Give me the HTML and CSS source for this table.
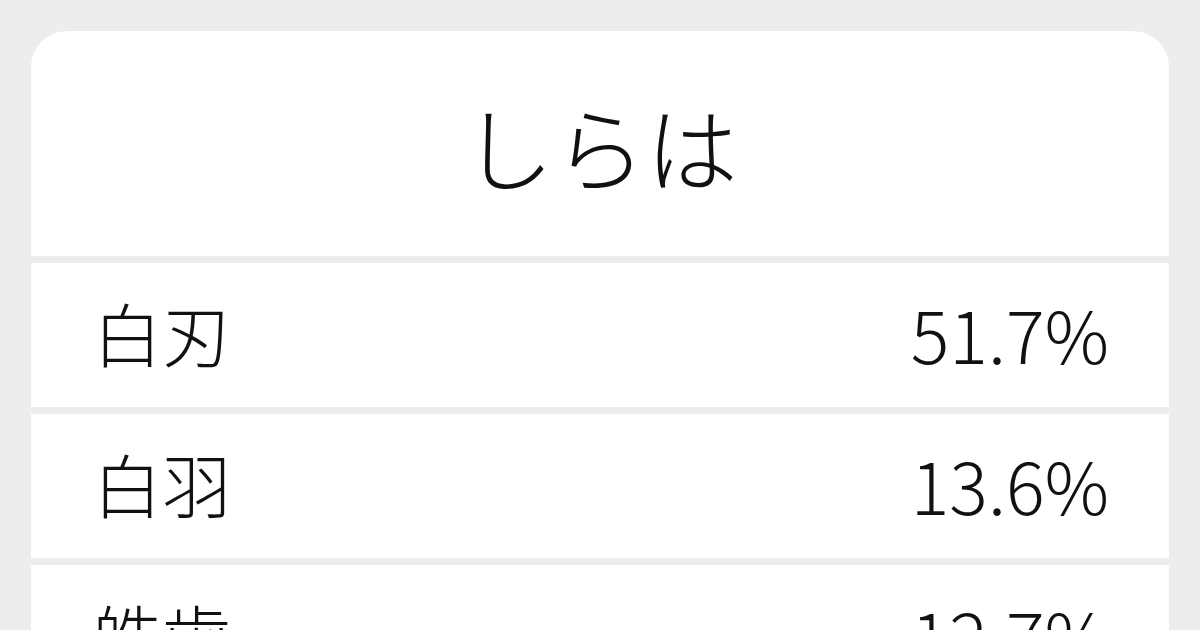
FILE: index.html
```html
<!DOCTYPE html>
<html lang="ja">
<head>
    <meta charset="UTF-8">
    <meta name="viewport" content="width=device-width, initial-scale=1.0">
    <title>しらは</title>
    <link rel="stylesheet" href="styles.css">
</head>
<body>
    <div class="card">
        <div class="header">しらは</div>
        <div class="row">
            <span class="word">白刃</span>
            <span class="rate">51.7%</span>
        </div>
        <div class="row">
            <span class="word">白羽</span>
            <span class="rate">13.6%</span>
        </div>
        <div class="row">
            <span class="word">皓歯</span>
            <span class="rate">12.7%</span>
        </div>
    </div>
</body>
</html>
```

FILE: styles.css
```css
body {
    margin: 0;
    padding: 31px 31px 0;
    background-color: #ededed;
    font-family: "Noto Sans CJK JP", sans-serif;
    font-weight: 300;
    color: #111;
    height: 630px;
    box-sizing: border-box;
    overflow: hidden;
}
.card {
    display: flex;
    flex-direction: column;
    gap: 7px;
    border-radius: 36px 36px 0 0;
    overflow: hidden;
}
.header {
    height: 225px;
    background-color: #fff;
    display: flex;
    align-items: center;
    justify-content: center;
    font-size: 92px;
    padding-top: 2px;
    box-sizing: border-box;
}
.row {
    height: 144px;
    flex-shrink: 0;
    background-color: #fff;
    display: flex;
    align-items: center;
    justify-content: space-between;
    padding: 0 60px 6px 62px;
    box-sizing: border-box;
    font-size: 69px;
}
.rate {
    font-size: 72px;
}
```
